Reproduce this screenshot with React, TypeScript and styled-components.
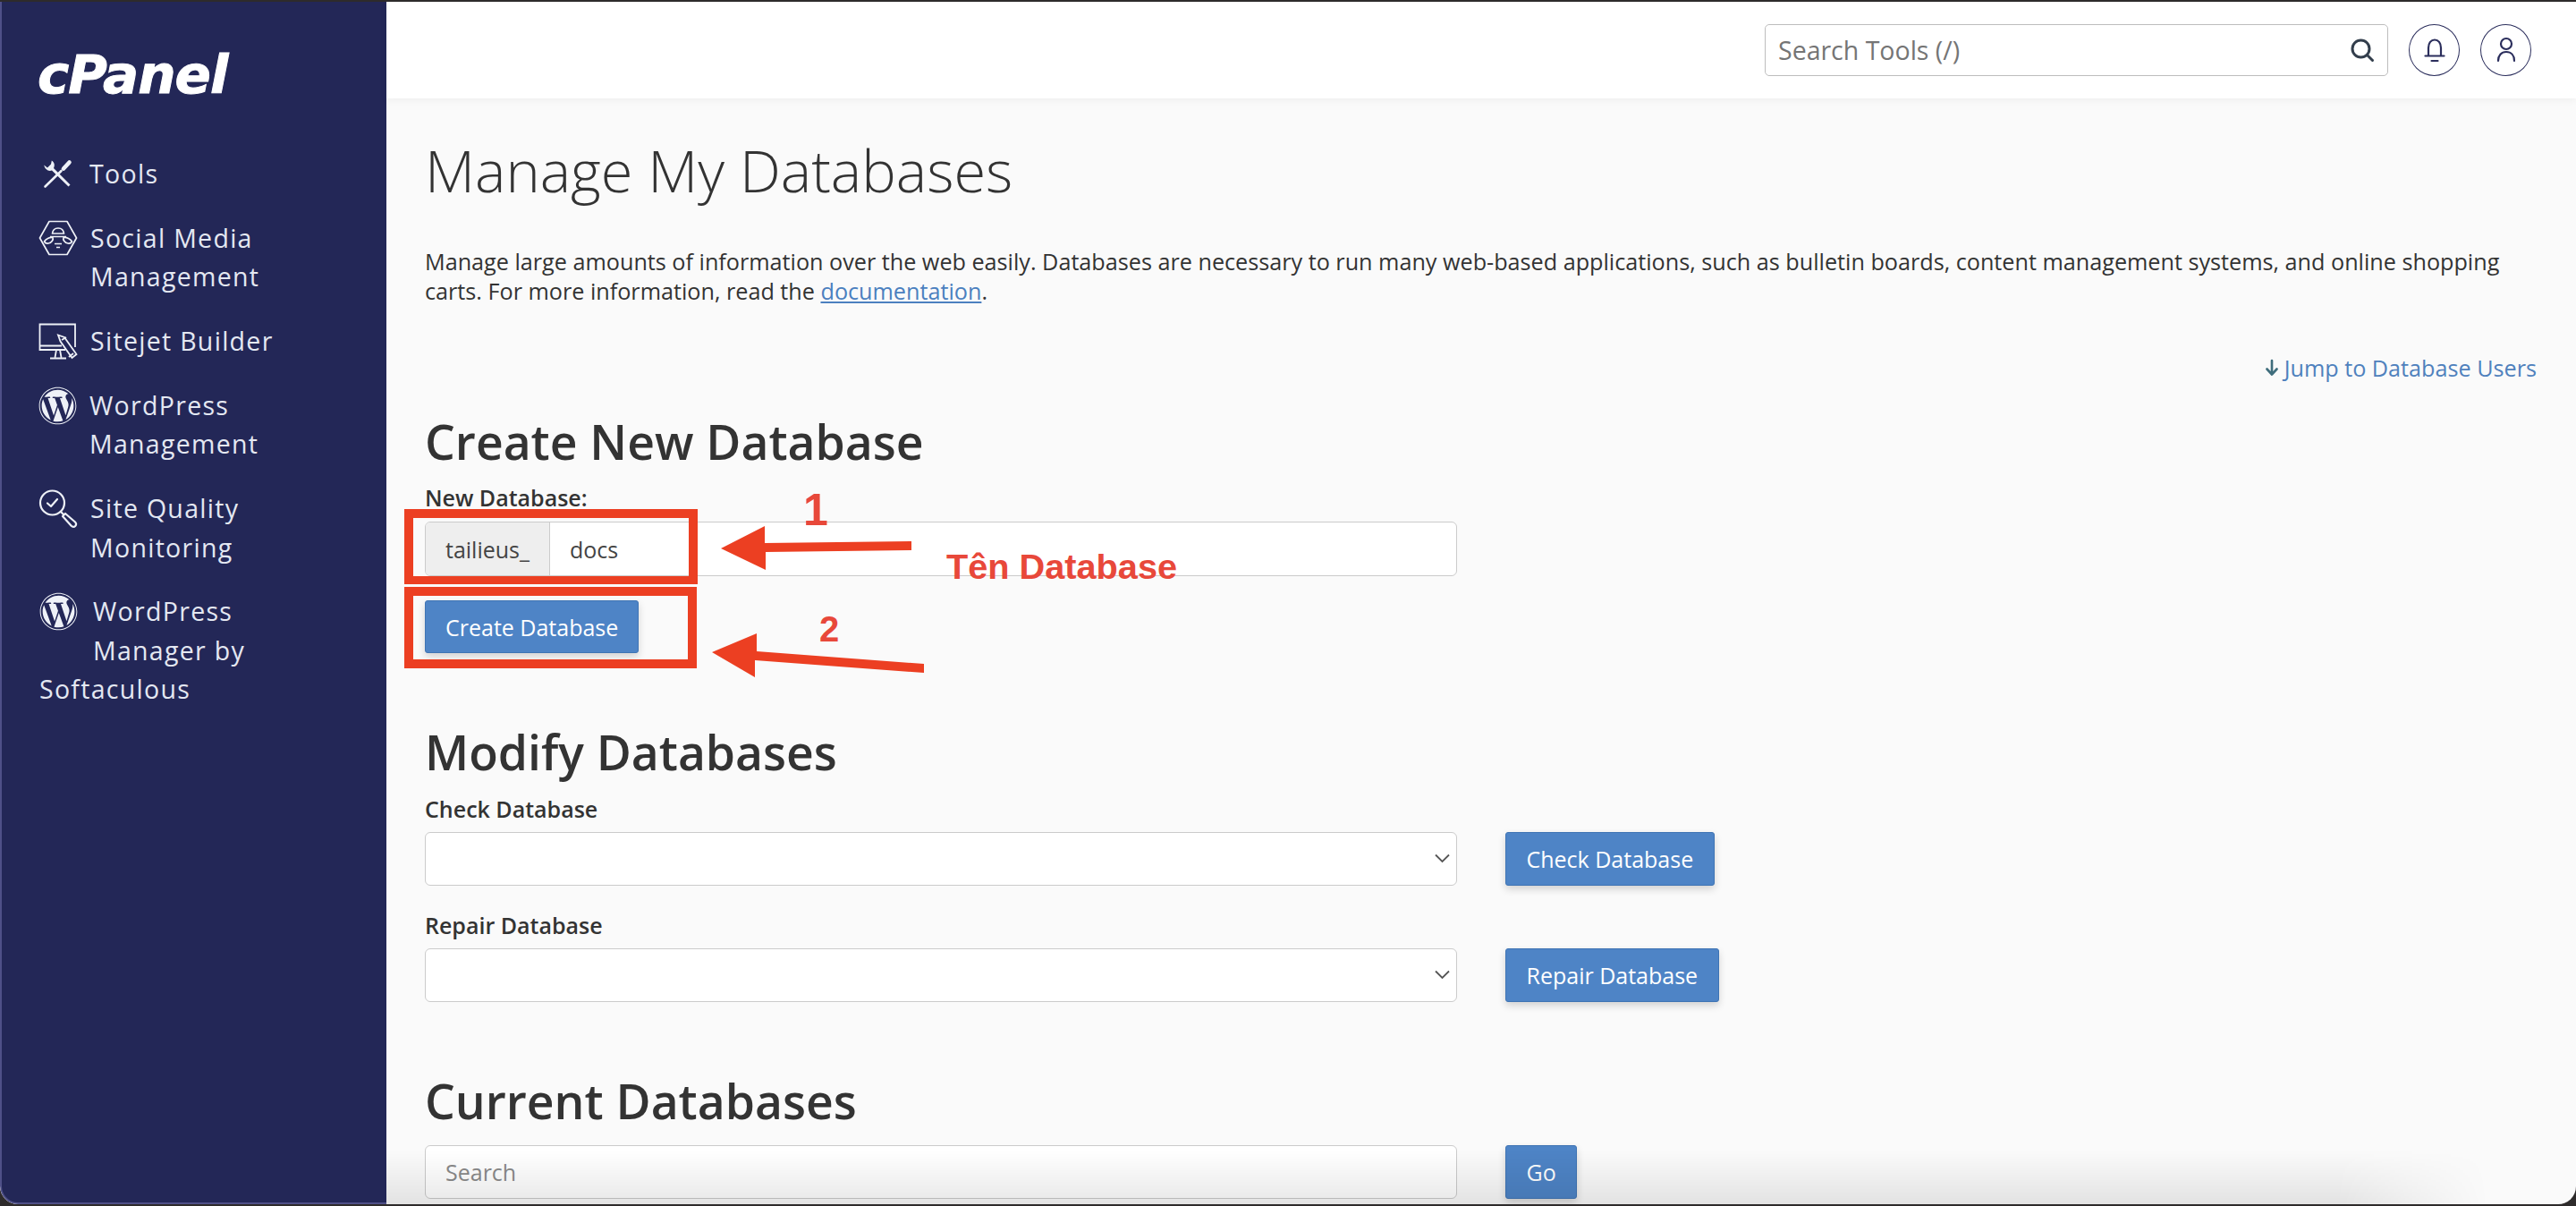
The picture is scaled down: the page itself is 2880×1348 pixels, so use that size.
import React from 'react'
import styled, { createGlobalStyle } from 'styled-components'
import { FaWordpress } from 'react-icons/fa'

const GlobalStyle = createGlobalStyle`
  html, body {
    margin: 0;
    width: 2880px;
    height: 1348px;
    overflow: hidden;
    background: #2e2b2b;
  }
  * { box-sizing: border-box; }
`

const Shell = styled.div`
  position: relative;
  width: 2880px;
  height: 1348px;
  padding: 2px 0;
  background: #2e2b2b;
  font-family: 'Open Sans', 'Liberation Sans', sans-serif;
`

const Frame = styled.div`
  display: flex;
  height: 1344px;
  border-radius: 0 0 20px 20px;
  overflow: hidden;
  background: #fafafa;
`

/* sidebar */
const Sidebar = styled.aside`
  flex: 0 0 432px;
  padding: 56px 0 0 41px;
  background: #232757;
  border-left: 2px solid #4f5088;
  border-bottom: 2px solid #4f5088;
  border-bottom-left-radius: 20px;
  color: #e4e8f2;
`

const Logo = styled.div`
  height: 52px;
  margin-left: -1px;
  font-family: 'DejaVu Sans', sans-serif;
  font-size: 59.5px;
  line-height: 52px;
  font-weight: 700;
  font-style: italic;
  letter-spacing: -1px;
  color: #fff;
  -webkit-text-stroke: 1px #fff;
`

const Nav = styled.nav`
  display: flex;
  flex-direction: column;
  gap: 28.3px;
  margin-top: 63px;
  width: 330px;
`

const NavItem = styled.a`
  display: flex;
  gap: 14px;
  font-size: 28.5px;
  line-height: 43.5px;
  letter-spacing: 1.3px;
`

const NavIcon = styled.span`
  flex: 0 0 43px;
  height: 43px;
  display: flex;
  align-items: center;
  justify-content: center;
  color: #eef1f7;
`

const WrapItem = styled.a`
  display: block;
  padding-left: 1px;
  font-size: 28.5px;
  line-height: 43.5px;
  letter-spacing: 1.3px;
`

const FloatIcon = styled.span`
  float: left;
  width: 60px;
  height: 80px;
  color: #eef1f7;
`

/* main column */
const Main = styled.main`
  position: relative;
  flex: 1;
  min-width: 0;
  &::after {
    content: '';
    position: absolute;
    left: 0;
    right: 0;
    bottom: 0;
    height: 60px;
    pointer-events: none;
    background: linear-gradient(to bottom, rgba(0, 0, 0, 0), rgba(0, 0, 0, 0.09));
    -webkit-mask-image: linear-gradient(to right, #000 0, #000 2180px, transparent 2350px);
    mask-image: linear-gradient(to right, #000 0, #000 2180px, transparent 2350px);
  }
`

const TopBar = styled.header`
  display: flex;
  align-items: center;
  justify-content: flex-end;
  gap: 23px;
  height: 108px;
  padding: 0 50px 0 0;
  background: #fff;
  box-shadow: 0 2px 8px rgba(0, 0, 0, 0.05);
`

const ToolSearch = styled.div`
  display: flex;
  align-items: center;
  justify-content: space-between;
  width: 697px;
  height: 58px;
  padding: 0 14px 0 14px;
  border: 1px solid #bdbdbd;
  border-radius: 5px;
  background: #fff;
`

const ToolSearchInput = styled.input`
  flex: 1;
  min-width: 0;
  border: 0;
  outline: 0;
  padding: 0;
  background: transparent;
  font-family: inherit;
  font-size: 28.5px;
  color: #666;
  &::placeholder { color: #757575; opacity: 1; }
`

const RoundButton = styled.button`
  display: flex;
  align-items: center;
  justify-content: center;
  width: 57px;
  height: 58px;
  padding: 0;
  border: 1.5px solid #2b2e5c;
  border-radius: 50%;
  background: #fff;
  color: #2b2e5c;
`

const Content = styled.div`
  padding: 40px 44px 0 43px;
  color: #333;
`

const Title = styled.h1`
  margin: 0;
  font-size: 64.9px;
  line-height: 80px;
  font-weight: 300;
  color: #333;
`

const Intro = styled.p`
  margin: 46px 0 0;
  font-size: 25.2px;
  line-height: 33px;
  color: #333;
`

const DocLink = styled.a`
  color: #4b80bf;
  text-decoration: underline;
`

const JumpRow = styled.div`
  display: flex;
  align-items: center;
  justify-content: flex-end;
  gap: 6px;
  height: 34px;
  margin-top: 52px;
  font-size: 25.2px;
  color: #4f81bd;
`

const SectionTitle = styled.h2<{ $gap: number }>`
  margin: ${p => p.$gap}px 0 0;
  font-size: 53.4px;
  line-height: 60px;
  font-weight: 540;
  color: #333;
`

const FieldLabel = styled.label<{ $gap: number }>`
  display: block;
  margin-top: ${p => p.$gap}px;
  font-size: 25px;
  line-height: 32px;
  font-weight: 600;
  color: #333;
`

const InputGroup = styled.div`
  display: flex;
  width: 1154px;
  height: 61px;
  margin-top: 11px;
  border: 1px solid #cbcbcb;
  border-radius: 6px;
  background: #fff;
  overflow: hidden;
`

const Addon = styled.span`
  flex: 0 0 139px;
  display: flex;
  align-items: center;
  padding-left: 22px;
  border-right: 1px solid #cbcbcb;
  background: #eee;
  font-size: 25px;
  color: #444;
`

const TextField = styled.input`
  flex: 1;
  min-width: 0;
  border: 0;
  outline: 0;
  padding: 0 22px;
  background: transparent;
  font-family: inherit;
  font-size: 25px;
  color: #444;
`

const ActionButton = styled.button`
  flex: none;
  height: 60px;
  padding: 0 22.5px;
  border: 1px solid #3f74b4;
  border-radius: 3px;
  background: #4e84c6;
  box-shadow: 0 4px 8px rgba(0, 0, 0, 0.16);
  font-family: inherit;
  font-size: 25px;
  color: #fff;
`

const CreateButton = styled(ActionButton)`
  display: block;
  height: 59px;
  margin-top: 27px;
  padding: 0 22px;
`

const ControlRow = styled.div<{ $gap: number }>`
  display: flex;
  gap: 54px;
  margin-top: ${p => p.$gap}px;
`

const SelectBox = styled.div`
  position: relative;
  width: 1154px;
  height: 60px;
`

const Select = styled.select`
  appearance: none;
  display: block;
  width: 100%;
  height: 100%;
  border: 1px solid #cbcbcb;
  border-radius: 6px;
  background: #fff;
`

const Chevron = styled.svg`
  position: absolute;
  right: 8px;
  top: 24px;
`

const SearchField = styled.input`
  width: 1154px;
  height: 60px;
  padding: 0 22px;
  border: 1px solid #cbcbcb;
  border-radius: 6px;
  outline: 0;
  background: #fff;
  font-family: inherit;
  font-size: 25px;
  &::placeholder { color: #8a8a8a; opacity: 1; }
`

/* the red marks somebody drew on top of the screenshot */
const FieldMark = styled.div`
  position: absolute;
  left: 452px;
  top: 569px;
  width: 328px;
  height: 84px;
  border: solid #ec3f22;
  border-width: 10px 10px 9px 10px;
`

const ButtonMark = styled.div`
  position: absolute;
  left: 452px;
  top: 656px;
  width: 327px;
  height: 91px;
  border: 10px solid #ec3f22;
`

const Arrows = styled.svg`
  position: absolute;
  left: 790px;
  top: 580px;
`

const StepNumber = styled.span<{ $x: number; $y: number; $size: number }>`
  position: absolute;
  left: ${p => p.$x}px;
  top: ${p => p.$y}px;
  font-family: 'Liberation Sans', Arial, sans-serif;
  font-size: ${p => p.$size}px;
  line-height: 1;
  font-weight: 700;
  color: #e8483a;
`

const Note = styled.span`
  position: absolute;
  left: 1058px;
  top: 610px;
  font-family: 'Liberation Sans', Arial, sans-serif;
  font-size: 39.7px;
  line-height: 46px;
  font-weight: 700;
  white-space: nowrap;
  color: #e8483a;
`

const ToolsIcon = () => (
  <svg width="33" height="33" viewBox="0 0 33 33" fill="none" stroke="currentColor" strokeLinecap="round">
    <path
      d="M1.200 6.500L5 9.500L9 5.500L9.800 1.600C13 3.500 13.500 7 12 10L30.500 28.500L28.500 30.500L10 12.500C6 14 2 11 1.200 6.500Z"
      fill="currentColor"
      stroke="none"
    />
    <path d="M23 10.500L29.500 3.500" strokeWidth="4.600" />
    <path d="M20.500 13L2.500 30.500" strokeWidth="2.600" />
  </svg>
)

const SocialIcon = () => (
  <svg width="44" height="40" viewBox="0 0 44 40" fill="none" stroke="currentColor" strokeWidth="1.700" strokeLinejoin="round">
    <path d="M12 1.500h20L42.500 20 32 38.500H12L1.500 20z" />
    <path d="M15.500 15c.5-4 3.200-6 6.500-6s6 2 6.500 6z" />
    <path d="M13 18.500h18M18 26.500h8M20 30.500h4" />
    <path d="M6.500 24c1.500-3 6-5 9.500-4.500 1 2.500-1.500 6-5 6.500-2 .2-3.800-.6-4.500-2zM37.500 24c-1.500-3-6-5-9.500-4.500-1 2.500 1.500 6 5 6.500 2 .2 3.800-.6 4.500-2z" />
  </svg>
)

const SitejetIcon = () => (
  <svg width="44" height="42" viewBox="0 0 44 42" fill="none" stroke="currentColor" strokeWidth="1.800">
    <path d="M30 30H1.500V1.500h39.500V27M1.500 25.500H26" />
    <path d="M20 30l-1.500 8.500M24 30l1.500 8.500M13 39.500h18" />
    <path d="M22 13.500l7 2.500 13.500 19-5 4L24.500 20.500z" />
    <path d="M26 19l5-3M34 38l5-4" />
  </svg>
)

const QualityIcon = () => (
  <svg width="44" height="44" viewBox="0 0 44 44" fill="none" stroke="currentColor" strokeWidth="2.200" strokeLinecap="round" strokeLinejoin="round">
    <circle cx="15.500" cy="15" r="13.500" />
    <path d="M10 15.500l4 3.500 7-8" />
    <path d="M25 25l2.500 2.500M27 30l3-3 11 9.500c1.500 1.500 1.500 3.200.2 4.500s-3 1.300-4.500-.2z" />
  </svg>
)

const BellIcon = () => (
  <svg width="24" height="28" viewBox="0 0 24 28" fill="none" stroke="currentColor" strokeWidth="2.200" strokeLinecap="round">
    <path d="M5 20V11.500C5 6 8 2.500 12 2.500s7 3.500 7 9V20" />
    <path d="M1.500 20.500h21" />
    <path d="M8.500 26h7" />
  </svg>
)

const UserIcon = () => (
  <svg width="22" height="30" viewBox="0 0 22 30" fill="none" stroke="currentColor" strokeWidth="2.200" strokeLinecap="round">
    <circle cx="11" cy="8" r="6" />
    <path d="M2 27c0-6 3.500-10 9-10s9 4 9 10" />
  </svg>
)

const SearchIcon = () => (
  <svg width="28" height="28" viewBox="0 0 28 28" fill="none" stroke="#333e4c" strokeWidth="3" strokeLinecap="round">
    <circle cx="12.500" cy="12.500" r="9.500" />
    <path d="M20 20l5.500 5.500" />
  </svg>
)

const DownArrow = () => (
  <svg width="16" height="20" viewBox="0 0 16 20" fill="none" stroke="#3f6d7c" strokeWidth="2.600" strokeLinecap="round" strokeLinejoin="round">
    <path d="M8 2v15M2.500 11.500L8 17.500l5.500-6" />
  </svg>
)

const SelectField = () => (
  <SelectBox>
    <Select />
    <Chevron width="17" height="11" viewBox="0 0 17 11" fill="none" stroke="#555" strokeWidth="1.800">
      <path d="M1 1.500l7.500 7.500L16 1.500" />
    </Chevron>
  </SelectBox>
)

const navItems = [
  { icon: <ToolsIcon />, label: 'Tools' },
  { icon: <SocialIcon />, label: 'Social Media Management' },
  { icon: <SitejetIcon />, label: 'Sitejet Builder' },
  { icon: <FaWordpress size={43} />, label: 'WordPress Management' },
  { icon: <QualityIcon />, label: 'Site Quality Monitoring' },
]

export default function App() {
  return (
    <Shell>
      <GlobalStyle />
      <Frame>
        <Sidebar>
          <Logo>cPanel</Logo>
          <Nav>
            {navItems.map(item => (
              <NavItem key={item.label}>
                <NavIcon>{item.icon}</NavIcon>
                <span>{item.label}</span>
              </NavItem>
            ))}
            <WrapItem>
              <FloatIcon>
                <FaWordpress size={43} />
              </FloatIcon>
              WordPress Manager by Softaculous
            </WrapItem>
          </Nav>
        </Sidebar>
        <Main>
          <TopBar>
            <ToolSearch>
              <ToolSearchInput placeholder="Search Tools (/)" readOnly />
              <SearchIcon />
            </ToolSearch>
            <RoundButton><BellIcon /></RoundButton>
            <RoundButton><UserIcon /></RoundButton>
          </TopBar>
          <Content>
            <Title>Manage My Databases</Title>
            <Intro>
              Manage large amounts of information over the web easily. Databases are necessary to run many web-based applications, such as bulletin boards, content management systems, and online shopping carts. For more information, read the <DocLink>documentation</DocLink>.
            </Intro>
            <JumpRow>
              <DownArrow />
              <span>Jump to Database Users</span>
            </JumpRow>

            <SectionTitle $gap={36}>Create New Database</SectionTitle>
            <FieldLabel $gap={16}>New Database:</FieldLabel>
            <InputGroup>
              <Addon>tailieus_</Addon>
              <TextField defaultValue="docs" />
            </InputGroup>
            <CreateButton>Create Database</CreateButton>

            <SectionTitle $gap={81}>Modify Databases</SectionTitle>
            <FieldLabel $gap={17}>Check Database</FieldLabel>
            <ControlRow $gap={10}>
              <SelectField />
              <ActionButton>Check Database</ActionButton>
            </ControlRow>
            <FieldLabel $gap={28}>Repair Database</FieldLabel>
            <ControlRow $gap={10}>
              <SelectField />
              <ActionButton>Repair Database</ActionButton>
            </ControlRow>

            <SectionTitle $gap={81}>Current Databases</SectionTitle>
            <ControlRow $gap={19}>
              <SearchField placeholder="Search" />
              <ActionButton>Go</ActionButton>
            </ControlRow>
          </Content>
        </Main>
      </Frame>

      <FieldMark />
      <ButtonMark />
      <Arrows width="250" height="180" viewBox="790 580 250 180" fill="#ec3f22">
        <path d="M806 613L855 588V607L1019 605V615L856 617V637Z" />
        <path d="M796 729L846 708V728L1033 742V752L844 738V757Z" />
      </Arrows>
      <StepNumber $x={898} $y={545} $size={50}>1</StepNumber>
      <StepNumber $x={916} $y={683} $size={40}>2</StepNumber>
      <Note>Tên Database</Note>
    </Shell>
  )
}
